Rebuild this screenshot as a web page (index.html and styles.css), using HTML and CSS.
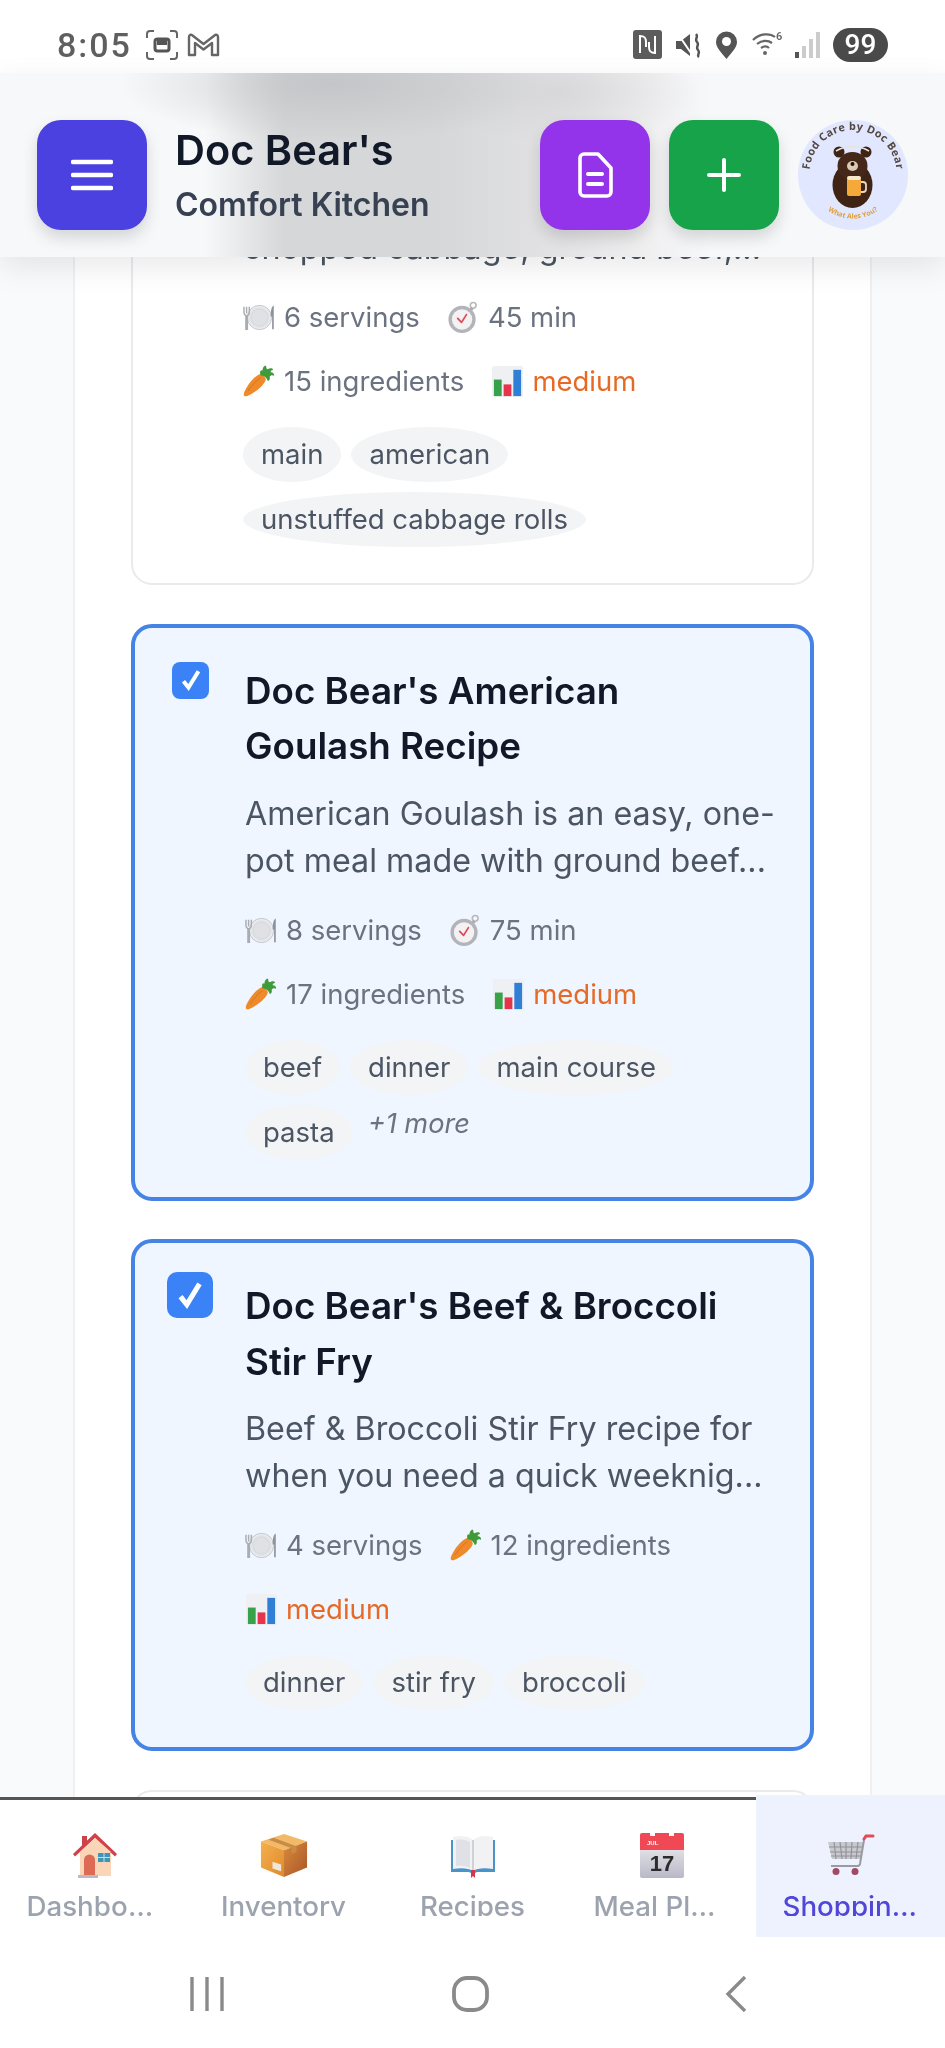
FILE: index.html
```html
<!DOCTYPE html>
<html lang="en">
<head>
<meta charset="utf-8">
<title>Doc Bear's Comfort Kitchen</title>
<link rel="stylesheet" href="styles.css">
</head>
<body>
<svg class="defs" aria-hidden="true">
  <defs>
    <linearGradient id="boxL" x1="0" y1="0" x2="1" y2="1"><stop offset="0" stop-color="#f5b04e"/><stop offset="1" stop-color="#e08a2c"/></linearGradient>
    <linearGradient id="boxR" x1="0" y1="0" x2="1" y2="1"><stop offset="0" stop-color="#d98a3a"/><stop offset="1" stop-color="#a9562a"/></linearGradient>
    <linearGradient id="calB" x1="0" y1="0" x2="0" y2="1"><stop offset="0" stop-color="#f6f6f8"/><stop offset="1" stop-color="#b9b8c6"/></linearGradient>
    <radialGradient id="plateG"><stop offset="0" stop-color="#eef0f3"/><stop offset=".6" stop-color="#d3d6da"/><stop offset="1" stop-color="#f1f2f4"/></radialGradient>
    <symbol id="i-plate" viewBox="0 0 34 34">
      <circle cx="17" cy="17" r="12.5" fill="url(#plateG)" stroke="#c2c5ca" stroke-width="1"/>
      <circle cx="17" cy="17" r="8" fill="#dfe1e5"/>
      <path d="M1 6v6c0 2 1 2.500 2 3v14h1.500V15c1-.5 2-1 2-3V6M3.700 6v7" fill="none" stroke="#a9adb3" stroke-width="1.500"/>
      <path d="M31 5c-2 2-2.500 6-2.500 11h1.500v13h1.700V5z" fill="#8f9399"/>
    </symbol>
    <symbol id="i-timer" viewBox="0 0 34 34">
      <circle cx="27" cy="4.500" r="3" fill="none" stroke="#b6b8bc" stroke-width="1.600"/>
      <path d="M24 7l2.500 2.500" stroke="#a9abb0" stroke-width="2.500"/>
      <circle cx="15.500" cy="19" r="14" fill="#b3b4b9"/>
      <circle cx="15.500" cy="19" r="10.500" fill="#f4f1f3"/>
      <path d="M11 18l4 4 5-8" fill="none" stroke="#dc4a55" stroke-width="1.800" stroke-linecap="round" stroke-linejoin="round"/>
    </symbol>
    <symbol id="i-carrot" viewBox="0 0 34 34">
      <path d="M1.500 32C0 31 1 28 3 24.500 7 17 12 12 17 9.500c3-1 6.500 3 6.500 6-2.500 6-9 11-14.500 14C6 31 3 33 1.500 32z" fill="#ef8a2b"/>
      <path d="M5 27c4-6 8-10 13-14" fill="none" stroke="#c96a1c" stroke-width="1" opacity=".7"/>
      <path d="M18 10c-1-3 0-6 2-4 0-3 2-6 4-5-.5 2 .5 3 1.500 3.500 2-1.500 5-1.500 5.500.5-1.500.5-2.500 1-2.500 2.500 2 0 4 1.500 3.500 3.500-2-1-3.500-.5-4.500 1 .5 2 0 4-2 4.500-.5-3-4-6-7.500-6z" fill="#3f9a3a"/>
    </symbol>
    <symbol id="i-chart" viewBox="0 0 34 34">
      <rect x="1" y="1" width="32" height="32" rx="2" fill="#eef0f3"/>
      <rect x="3" y="15" width="8" height="17" fill="#37a24a"/>
      <rect x="13" y="20" width="8" height="12" fill="#e5344b"/>
      <rect x="23" y="5" width="8" height="27" fill="#2f7fd6"/>
    </symbol>
    <symbol id="i-house" viewBox="0 0 46 46">
      <path d="M8 20h31v24H8z" fill="#fbd5b8"/>
      <path d="M10 4h5v7l-5 5z" fill="#c9434c"/>
      <path d="M1 22L23 1l22 21-2 2.500L23 6 3 24.500z" fill="#d2404a"/>
      <path d="M23 6L8 20h31z" fill="#fbd5b8"/>
      <path d="M12 44V28a5.500 5.500 0 0 1 11 0v16z" fill="#dd6a55"/>
      <rect x="26" y="21" width="12" height="9" fill="#3e95b8"/>
      <path d="M32 21v9M26 25.500h12" stroke="#bfe3ee" stroke-width="1"/>
      <rect x="6" y="43" width="20" height="3" fill="#bcb8c8"/>
    </symbol>
    <symbol id="i-box" viewBox="0 0 50 46">
      <path d="M25 1l24 8-24 9L1 9z" fill="#f2b968"/>
      <path d="M1 9l24 9v28L1 36z" fill="url(#boxL)"/>
      <path d="M49 9L25 18v28l24-10z" fill="url(#boxR)"/>
      <path d="M14 5l24 9v6l-5 2v-6L9 7z" fill="#c98c45"/>
      <path d="M13 30l9 3v7l-9-3z" fill="#f1e6da"/>
    </symbol>
    <symbol id="i-book" viewBox="0 0 46 46">
      <path d="M1 8h44v32H27l-4 2-4-2H1z" fill="#4a93c9"/>
      <path d="M3 5c8-2 16-1 20 3 4-4 12-5 20-3v32c-8-1.500-16-1-20 2-4-3-12-3.500-20-2z" fill="#f2f2f4"/>
      <path d="M23 8v31" stroke="#c5c6cc" stroke-width="1.500"/>
      <path d="M6 8c6-1 11 0 14 2v26c-4-2-9-2.500-14-2z" fill="#e0e1e6"/>
      <path d="M21 38h4v8l-2-2-2 2z" fill="#d8344b"/>
    </symbol>
    <symbol id="i-cal" viewBox="0 0 46 46">
      <rect x="1" y="1" width="44" height="45" rx="2" fill="url(#calB)"/>
      <path d="M1 3a2 2 0 0 1 2-2h40a2 2 0 0 1 2 2v15H1z" fill="#f04855"/>
      <path d="M11 0h5v4h-5zM30 0h5v4h-5z" fill="#fff"/>
      <text x="8" y="13" class="cal-mo">JUL</text>
      <text x="23" y="39" text-anchor="middle" class="cal-day">17</text>
    </symbol>
    <symbol id="i-cart" viewBox="0 0 48 42">
      <path d="M1 8h36l-3 17H5z" fill="#c8c9ce"/>
      <path d="M7 8l2 17M13 8l2 17M19 8v17M25 8l-1 17M31 8l-2 17M2 13h34M3 18h32M4 22h30" stroke="#8f9096" stroke-width="1.100"/>
      <path d="M37 6l-4 24c-.3 1.500-1 2-3 2H4" fill="none" stroke="#9a9ba1" stroke-width="2"/>
      <path d="M37 5l2-3h7" fill="none" stroke="#e24a55" stroke-width="3" stroke-linecap="round"/>
      <circle cx="9" cy="37.500" r="3.500" fill="#a24a62"/>
      <circle cx="28" cy="37.500" r="3.500" fill="#a24a62"/>
    </symbol>
  </defs>
</svg>

<div class="screen">
  <div class="status">
    <div class="status-left">
      <span class="clock">8:05</span>
      <svg class="sb-rec" viewBox="0 0 32 30"><path d="M1 8V4a3 3 0 0 1 3-3h4M24 1h4a3 3 0 0 1 3 3v4M31 22v4a3 3 0 0 1-3 3h-4M8 29H4a3 3 0 0 1-3-3v-4" fill="none" stroke="#666" stroke-width="2"/><rect x="9" y="9" width="14" height="12" rx="2.500" fill="none" stroke="#555" stroke-width="3"/><rect x="11" y="10" width="10" height="5" fill="#555"/></svg>
      <svg class="sb-m" viewBox="0 0 33 24"><path d="M2 22V4c0-2 2-3 3.500-1.500L16.500 11l11-8.500C29 1 31 2 31 4v18h-6V10l-8.500 6.500L8 10v12z" fill="none" stroke="#666" stroke-width="2.400" stroke-linejoin="round"/></svg>
    </div>
    <div class="status-right">
      <svg class="sb-nfc" viewBox="0 0 29 29"><rect width="29" height="29" rx="3" fill="#5c5c5c"/><path d="M7 23V6c5 0 6 2 6 6v5M22 6v17c-5 0-6-2-6-6v-5" fill="none" stroke="#fff" stroke-width="2"/></svg>
      <svg class="sb-mute" viewBox="0 0 28 28"><path d="M1 10h5l9-7v22l-9-7H1z" fill="#555"/><path d="M3 3l15 22" stroke="#fff" stroke-width="2"/><path d="M21 3c3 3-2 5 1 8s-2 5 1 8-2 5 1 7" fill="none" stroke="#555" stroke-width="2.400"/></svg>
      <svg class="sb-pin" viewBox="0 0 23 28"><path d="M11.500 28C6 21 1 16.500 1 11a10.500 10.500 0 0 1 21 0c0 5.500-5 10-10.500 17z" fill="#555"/><circle cx="11.500" cy="10.500" r="4.500" fill="#fff"/></svg>
      <svg class="sb-wifi" viewBox="0 0 31 24"><path d="M1 9c7-7 17-7 22-3M5 13c5-4 11-4 15-1M9 17c3-2 6-2 8 0" fill="none" stroke="#666" stroke-width="2.200"/><circle cx="13" cy="22" r="2" fill="#666"/><text x="24" y="9" class="sb-six">6</text></svg>
      <svg class="sb-sig" viewBox="0 0 25 26"><rect x="0" y="20" width="4" height="6" fill="#555"/><rect x="7" y="14" width="4" height="12" fill="#ccc"/><rect x="14" y="7" width="4" height="19" fill="#ccc"/><rect x="21" y="0" width="4" height="26" fill="#ccc"/></svg>
      <span class="badge">99</span>
    </div>
  </div>

  <header class="topbar">
    <button class="sq sq-indigo" type="button" aria-label="Menu">
      <svg class="ic-menu" viewBox="0 0 42 32"><path d="M2 3h38M2 16h38M2 29h38" stroke="#fff" stroke-width="4.500" stroke-linecap="round"/></svg>
    </button>
    <div class="brand">
      <div class="brand-name">Doc Bear's</div>
      <div class="brand-sub">Comfort Kitchen</div>
    </div>
    <button class="sq sq-purple" type="button" aria-label="Notes">
      <svg class="ic-doc" viewBox="0 0 36 46"><path d="M7 2h14l13 14v24a4 4 0 0 1-4 4H7a4 4 0 0 1-4-4V6a4 4 0 0 1 4-4z" fill="none" stroke="#fff" stroke-width="3.600" stroke-linejoin="round"/><path d="M11 22h14M11 32h14" stroke="#fff" stroke-width="4" stroke-linecap="round"/></svg>
    </button>
    <button class="sq sq-green" type="button" aria-label="Add">
      <svg class="ic-plus" viewBox="0 0 34 34"><path d="M17 2v30M2 17h30" stroke="#fff" stroke-width="4" stroke-linecap="round"/></svg>
    </button>
    <svg class="logo" viewBox="0 0 110 110" role="img" aria-label="Food Care by Doc Bear">
      <defs>
        <path id="arcTop" d="M12 60a43.500 43.500 0 1 1 86 0"/>
        <path id="arcBot" d="M26 87a42 42 0 0 0 58 0"/>
      </defs>
      <circle cx="55" cy="55" r="55" fill="#e0e7ff"/>
      <text class="logo-top"><textPath href="#arcTop" startOffset="50%" text-anchor="middle">Food Care by Doc Bear</textPath></text>
      <text class="logo-bot"><textPath href="#arcBot" startOffset="50%" text-anchor="middle">What Ales You?</textPath></text>
      <circle cx="41" cy="32" r="5.500" fill="#3f2416"/>
      <circle cx="68" cy="32" r="5.500" fill="#3f2416"/>
      <path d="M38 31c10-6 23-6 33 0" fill="none" stroke="#e8e3dc" stroke-width="1.500"/>
      <ellipse cx="54.500" cy="65" rx="20" ry="23" fill="#3f2416"/>
      <ellipse cx="54.500" cy="46" rx="15" ry="14" fill="#452819"/>
      <ellipse cx="54.500" cy="46" rx="5.500" ry="5" fill="#d9c9b6"/>
      <circle cx="54.500" cy="44" r="2" fill="#1d100a"/>
      <path d="M62 62h3a3 3 0 0 1 3 3v4a3 3 0 0 1-3 3h-3" fill="none" stroke="#e8d8c0" stroke-width="1.800"/>
      <rect x="49" y="58" width="14" height="18" rx="2" fill="#f5a93a"/>
      <rect x="49" y="56" width="14" height="4" rx="2" fill="#f7e8cc"/>
    </svg>
  </header>

  <main class="scroller">
    <div class="panel">
      <article class="card">
        <h2 class="card-title">Doc Bear's Unstuffed Cabbage Rolls</h2>
        <p class="card-desc">Unstuffed cabbage rolls with chopped cabbage, ground beef,...</p>
        <div class="meta">
          <span class="meta-item"><svg class="emo"><use href="#i-plate"/></svg>6 servings</span>
          <span class="meta-item"><svg class="emo"><use href="#i-timer"/></svg>45 min</span>
          <span class="meta-item"><svg class="emo"><use href="#i-carrot"/></svg>15 ingredients</span>
          <span class="meta-item meta-level"><svg class="emo"><use href="#i-chart"/></svg>medium</span>
        </div>
        <div class="tags">
          <span class="tag">main</span>
          <span class="tag">american</span>
          <span class="tag">unstuffed cabbage rolls</span>
        </div>
      </article>

      <article class="card card-on">
        <span class="check"><svg viewBox="0 0 24 24"><path d="M6 13l4 5 8-13" fill="none" stroke="#fff" stroke-width="3.200"/></svg></span>
        <h2 class="card-title">Doc Bear's American Goulash Recipe</h2>
        <p class="card-desc">American Goulash is an easy, one-pot meal made with ground beef...</p>
        <div class="meta">
          <span class="meta-item"><svg class="emo"><use href="#i-plate"/></svg>8 servings</span>
          <span class="meta-item"><svg class="emo"><use href="#i-timer"/></svg>75 min</span>
          <span class="meta-item"><svg class="emo"><use href="#i-carrot"/></svg>17 ingredients</span>
          <span class="meta-item meta-level"><svg class="emo"><use href="#i-chart"/></svg>medium</span>
        </div>
        <div class="tags">
          <span class="tag">beef</span>
          <span class="tag">dinner</span>
          <span class="tag">main course</span>
          <span class="tag">pasta</span>
          <span class="more">+1 more</span>
        </div>
      </article>

      <article class="card card-on">
        <span class="check check-big"><svg viewBox="0 0 24 24"><path d="M6 13l4 5 8-13" fill="none" stroke="#fff" stroke-width="3.200"/></svg></span>
        <h2 class="card-title">Doc Bear's Beef &amp; Broccoli Stir Fry</h2>
        <p class="card-desc">Beef &amp; Broccoli Stir Fry recipe for when you need a quick weeknig...</p>
        <div class="meta">
          <span class="meta-item"><svg class="emo"><use href="#i-plate"/></svg>4 servings</span>
          <span class="meta-item"><svg class="emo"><use href="#i-carrot"/></svg>12 ingredients</span>
          <span class="meta-item meta-level"><svg class="emo"><use href="#i-chart"/></svg>medium</span>
        </div>
        <div class="tags">
          <span class="tag">dinner</span>
          <span class="tag">stir fry</span>
          <span class="tag">broccoli</span>
        </div>
      </article>

      <article class="card">
        <h2 class="card-title">Doc Bear's Chicken Noodle Soup</h2>
      </article>
    </div>
  </main>

  <nav class="tabs">
    <a class="tab"><svg class="tab-ic"><use href="#i-house"/></svg><span class="tab-label">Dashboard</span></a>
    <a class="tab"><svg class="tab-ic"><use href="#i-box"/></svg><span class="tab-label">Inventory</span></a>
    <a class="tab"><svg class="tab-ic"><use href="#i-book"/></svg><span class="tab-label">Recipes</span></a>
    <a class="tab"><svg class="tab-ic"><use href="#i-cal"/></svg><span class="tab-label">Meal Planner</span></a>
    <a class="tab tab-on"><svg class="tab-ic"><use href="#i-cart"/></svg><span class="tab-label">Shopping List</span></a>
  </nav>

  <div class="sysnav">
    <svg class="sys-recent" viewBox="0 0 34 36"><path d="M2 1v34M17 1v34M32 1v34" stroke="#8a8a8a" stroke-width="3.400"/></svg>
    <svg class="sys-home" viewBox="0 0 37 36"><rect x="2" y="2" width="33" height="32" rx="13" fill="none" stroke="#8a8a8a" stroke-width="3.800"/></svg>
    <svg class="sys-back" viewBox="0 0 22 36"><path d="M20 1L3 18l17 17" fill="none" stroke="#8a8a8a" stroke-width="3.400"/></svg>
  </div>
</div>
</body>
</html>
```

FILE: styles.css
```css
* { box-sizing: border-box; }
html, body { margin: 0; padding: 0; }
body { background: #f9fafb; font-family: Inter, "Noto Sans", sans-serif; }
.defs { width: 0; height: 0; display: block; overflow: hidden; }

.screen {
  width: 945px; height: 2048px; display: flex; flex-direction: column; overflow: hidden;
  background: #f9fafb; filter: blur(.5px);
}

/* status bar */
.status {
  height: 73px; flex: none; background: #fff; display: flex; justify-content: space-between;
  align-items: center; padding: 16px 57px 0 57px; color: #5f5f5f;
}
.status-left, .status-right { display: flex; align-items: center; }
.clock { font-family: Roboto, sans-serif; font-weight: 500; font-size: 34px; letter-spacing: 2px; margin-right: 14px; line-height: 40px; }
.sb-rec { width: 32px; height: 30px; margin-right: 9px; }
.sb-m { width: 33px; height: 24px; }
.status-right svg { display: block; }
.sb-nfc { width: 29px; height: 29px; margin-right: 13px; }
.sb-mute { width: 28px; height: 28px; margin-right: 12px; }
.sb-pin { width: 23px; height: 28px; margin-right: 14px; }
.sb-wifi { width: 31px; height: 24px; margin-right: 12px; margin-top: -4px; }
.sb-six { font: 600 11px Roboto, sans-serif; fill: #666; }
.sb-sig { width: 25px; height: 26px; margin-right: 13px; }
.badge {
  width: 55px; height: 34px; border-radius: 17px; background: #4a4a4a; color: #fff;
  font: 500 28px/34px Roboto, sans-serif; text-align: center;
}

/* app bar */
.topbar {
  height: 184px; flex: none; position: relative; z-index: 2; display: flex; align-items: center;
  padding: 20px 37px 0; gap: 19px;
  background:
    radial-gradient(ellipse 210px 60px at 330px 10px, rgba(190,191,194,.75), rgba(190,191,194,0)),
    radial-gradient(ellipse 140px 50px at 560px 20px, rgba(205,205,208,.5), rgba(205,205,208,0)),
    linear-gradient(90deg, #f7f8fa 0, #f7f8fa 205px, #d6d7d9 285px, #d6d7d9 440px, #e3e3e5 560px, #eeeeef 640px, #f7f8fa 710px);
  box-shadow: 0 10px 30px rgba(0,0,0,.09);
}
.sq {
  width: 110px; height: 110px; flex: none; border: 0; border-radius: 24px; padding: 0;
  display: flex; align-items: center; justify-content: center;
  box-shadow: 0 8px 16px rgba(0,0,0,.14);
}
.sq-indigo { background: #4a41e0; }
.sq-purple { background: #9333ea; }
.sq-green { background: #16a34a; }
.ic-menu { width: 42px; height: 32px; }
.ic-doc { width: 36px; height: 46px; }
.ic-plus { width: 34px; height: 34px; }
.brand { flex: 1; padding: 3px 0 0 9px; min-width: 0; }
.brand-name { font-size: 41.500px; font-weight: 600; line-height: 56px; color: #111827; }
.brand-sub { font-size: 32px; font-weight: 600; line-height: 54px; color: #374151; }
.logo { width: 110px; height: 110px; flex: none; }
.logo-top { font: 700 10.800px "Open Sans", sans-serif; fill: #54483f; letter-spacing: .4px; }
.logo-bot { font: 700 7px "Open Sans", sans-serif; fill: #e0a040; }

/* scroll content */
.scroller { flex: 1; min-height: 0; overflow: hidden; }
.panel {
  width: 795px; margin: -244px 0 0 75px; padding: 0 56px; background: #fff;
  display: flex; flex-direction: column; gap: 38.5px;
  box-shadow: 0 0 0 2px #eef0f2;
}
.card {
  position: relative; border: 2px solid #e8eaed; border-radius: 21px; background: #fff;
  padding: 35px 34px 36px 110px;
}
.card-on { border: 4px solid #4583e4; background: #eff6ff; padding: 35px 34px 37px 110px; }
.card-title { margin: 0 0 16px; max-width: 510px; font-size: 36.750px; line-height: 55.500px; font-weight: 600; color: #111827; }
.card-desc { margin: 0 0 26px; font-size: 32.250px; line-height: 47px; color: #4b5563; }
.meta { display: flex; flex-wrap: wrap; gap: 23px 27px; font-size: 27.500px; line-height: 41px; color: #6b7280; }
.meta-item { display: flex; align-items: center; white-space: nowrap; }
.meta-level { color: #e66a26; }
.emo { width: 33px; height: 33px; margin-right: 8px; flex: none; }
.tags { display: flex; flex-wrap: wrap; gap: 10px; margin-top: 25px; align-items: flex-start; }
.tag {
  font-size: 27.500px; line-height: 41px; padding: 7px 18px; color: #4b5563;
  background: #f3f4f6; border-radius: 50%; white-space: nowrap;
}
.more { font-size: 27.200px; line-height: 37px; font-style: italic; color: #6b7280; margin-left: 5px; }

.check {
  position: absolute; left: 37px; top: 34px; width: 37px; height: 37px; border-radius: 8px;
  background: #3b82f6; display: flex; align-items: center; justify-content: center;
}
.check svg { width: 30px; height: 30px; }
.check-big { left: 32px; top: 29px; width: 46px; height: 46px; border-radius: 10px; }
.check-big svg { width: 38px; height: 38px; }

/* bottom tabs */
.tabs { height: 138px; flex: none; display: flex; background: #fff; position: relative; z-index: 2; }
.tab {
  flex: 1; display: flex; flex-direction: column; align-items: center; border-top: 3px solid #555;
  padding-top: 32px; color: #9ca3af;
}
.tab-on { border-top: 0; margin-top: -2px; padding-top: 37px; background: #eef2ff; color: #5046d8; height: 142px; }
.tab-ic { width: 48px; height: 46px; flex: none; }
.tab-label {
  display: block; width: 136px; margin-top: 12px; height: 26px; overflow: hidden; text-overflow: ellipsis;
  text-align: center; font-size: 27.700px; line-height: 32px; font-weight: 500; white-space: nowrap;
}

/* android nav */
.sysnav { height: 113px; flex: none; background: #fff; display: flex; align-items: center; padding: 5px 0 0 190px; }
.sys-recent { width: 34px; height: 36px; margin-right: 228px; }
.sys-home { width: 37px; height: 36px; margin-right: 236px; }
.sys-back { width: 22px; height: 36px; }
.cal-mo { font: 700 6px "Liberation Sans", sans-serif; fill: #fff; }
.cal-day { font: 700 22px "Liberation Sans", sans-serif; fill: #2b2b2b; }
```
